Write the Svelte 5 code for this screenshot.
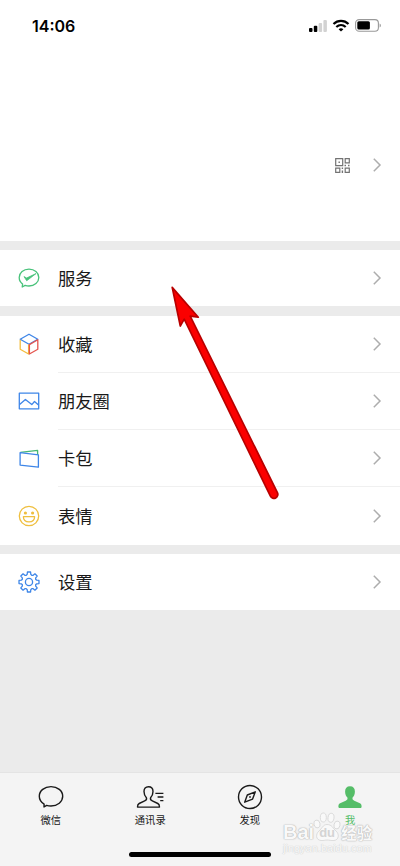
<script lang="ts">
  type Item = { icon: string; label: string };

  const groups: Item[][] = [
    [{ icon: 'service', label: '服务' }],
    [
      { icon: 'favorites', label: '收藏' },
      { icon: 'moments', label: '朋友圈' },
      { icon: 'cards', label: '卡包' },
      { icon: 'sticker', label: '表情' },
    ],
    [{ icon: 'settings', label: '设置' }],
  ];

  const tabs: Item[] = [
    { icon: 'chats', label: '微信' },
    { icon: 'contacts', label: '通讯录' },
    { icon: 'discover', label: '发现' },
    { icon: 'me', label: '我' },
  ];

  let active = $state('me');

  // outline of an eight-toothed gear centred on 11,11
  const gear = Array.from({ length: 8 }, (_, i) => {
    const points = [
      [-22.5, 7.2],
      [-13, 7.9],
      [-9, 10.1],
      [9, 10.1],
      [13, 7.9],
    ];
    return points
      .map(([deg, r]) => {
        const a = ((i * 45 + deg) * Math.PI) / 180;
        return `${(11 + r * Math.sin(a)).toFixed(2)},${(11 - r * Math.cos(a)).toFixed(2)}`;
      })
      .join(' ');
  }).join(' ');
</script>

{#snippet chevron()}
  <svg class="chevron" viewBox="0 0 10 16" width="10" height="16">
    <path d="M1.8 1.8 8 8l-6.2 6.2" />
  </svg>
{/snippet}

{#snippet rowIcon(name: string)}
  <svg class="row-icon" viewBox="0 0 22 22" width="22" height="22">
    {#if name === 'service'}
      <g stroke="#48c27a">
        <path d="M4.6 17.1C2.4 15.5 1.2 13.2 1.2 10.6c0-4.8 4.3-8.4 9.8-8.4s9.8 3.6 9.8 8.4-4.3 8.4-9.8 8.4c-1.4 0-2.700-.2-3.900-.6L4.200 20z" />
        <path d="M6 9.600 8.600 11 18 6.600 8.700 13.800z" fill="#48c27a" stroke-width=".8" />
      </g>
    {:else if name === 'favorites'}
      <path d="M2.200 6.200 11 1.200l8.800 5L11 11.300z" stroke="#3e86e8" />
      <path d="M2.200 6.800v9.400l8.400 4.800V11.600" stroke="#f3bd3e" />
      <path d="M19.800 6.800v9.400L11.400 21v-9.400z" stroke="#e5554f" />
    {:else if name === 'moments'}
      <g stroke="#3e86e8">
        <path d="M1.300 3.200h19.400v15.600H1.300z" />
        <path d="m1.600 14.600 5.800-5.200 6.400 5.200 2.700-3.100 4 3.400" />
      </g>
    {:else if name === 'cards'}
      <path d="m2.400 4.400 17.200-2.100v4.600" stroke="#48b873" />
      <path d="m2.100 4.700 18.300 2.200v12.300L2.100 17.100z" stroke="#3e86e8" />
    {:else if name === 'sticker'}
      <g stroke="#efbf3f">
        <circle cx="11" cy="11" r="9.7" />
        <path d="M5.400 11.700h11.200c0 3.100-2.300 5.100-5.600 5.100s-5.600-2-5.600-5.100z" />
        <circle class="eye" cx="7.400" cy="8" r="1.600" />
        <circle class="eye" cx="14.600" cy="8" r="1.600" />
      </g>
    {:else}
      <g stroke="#3e86e8">
        <polygon points={gear} />
        <circle cx="11" cy="11" r="3.600" />
      </g>
    {/if}
  </svg>
{/snippet}

{#snippet tabIcon(name: string)}
  <svg class="tab-icon" viewBox="0 0 30 26" width="30" height="26">
    {#if name === 'chats'}
      <path d="M8.100 20.200C5.200 18.400 3.300 15.500 3.300 12.300c0-5.500 5.200-9.700 11.700-9.700s11.700 4.200 11.700 9.700S21.500 22 15 22c-1.600 0-3.100-.2-4.400-.6L8 23z" />
    {:else if name === 'contacts'}
      <path d="M13.500 2.700c-3 0-4.500 2-4.500 4.800 0 3 1.100 4.800 2.400 6.200.5 1.400-.1 2.500-1.700 3.200l-5.500 2.600c-1.200.6-1.700 1.300-1.700 3.600h22c0-2.300-.5-3-1.700-3.600l-5.500-2.600c-1.600-.7-2.200-1.800-1.700-3.200C16.900 12.300 18 10.500 18 7.500c0-2.800-1.500-4.800-4.500-4.800z" />
      <path d="M20.400 9.400h8M22.600 13h5.800M25.200 16.600h3.200" />
    {:else if name === 'discover'}
      <circle cx="15" cy="13" r="11.500" />
      <path d="M20.300 7.800 17.600 15.100 9.700 18.200 12.300 11z" />
      <circle cx="15" cy="13" r=".3" />
    {:else}
      <path class="solid" d="M15 2.200c-3.200 0-4.900 2-4.900 5.200 0 2.800 1 4.800 2.300 6.200.4 1.500-.1 2.500-1.700 3.200l-5.600 2.500c-1.300.6-1.700 1.600-1.700 3.800 0 .5.3.8.8.8h21.600c.5 0 .8-.3.8-.8 0-2.200-.4-3.200-1.700-3.800l-5.600-2.500c-1.600-.7-2.100-1.700-1.700-3.200 1.300-1.400 2.300-3.400 2.300-6.200 0-3.200-1.700-5.200-4.900-5.200z" />
    {/if}
  </svg>
{/snippet}

<div class="screen">
  <header class="status">
    <span class="time">14:06</span>
    <div class="indicators">
      <svg viewBox="0 0 18 12" width="18" height="12">
        <rect x="0" y="8" width="3.500" height="4" rx="1" />
        <rect x="4.800" y="5.700" width="3.500" height="6.300" rx="1" />
        <rect class="weak" x="9.600" y="3" width="3.500" height="9" rx="1" />
        <rect class="weak" x="14.400" y="0" width="3.500" height="12" rx="1" />
      </svg>
      <svg class="wifi" viewBox="0 0 18 13" width="18" height="13">
        <path d="M1.500 5c4.300-4.200 10.700-4.200 15 0M4.300 8c2.800-2.600 6.600-2.600 9.400 0" />
        <path class="dot" d="M6.600 10.200c1.500-1.200 3.300-1.200 4.800 0L9 12.600z" />
      </svg>
      <svg class="battery" viewBox="0 0 27 13" width="27" height="13">
        <rect class="shell" x=".6" y=".6" width="22.800" height="11.600" rx="3.500" />
        <rect x="2.300" y="2.300" width="12.600" height="8.200" rx="1.500" />
        <path class="cap" d="M24.600 4.500c1.700.6 1.700 3.400 0 4z" />
      </svg>
    </div>
  </header>

  <section class="profile">
    <svg class="qr" viewBox="0 0 15 15" width="15" height="15">
      <path d="M.7.700h7v7h-7zM10.200.700h4.100v4.100h-4.100zM.7 10.200h4.100v4.100H.7zM10.200 10.200h4.100v4.100h-4.100z" />
      <path class="bits" d="M3.500 3.500h1.400v1.400H3.500zM9.500 6.700H11v1.500H9.500zM13 6.700h1.500v1.500H13zM6.700 9.600h1.400v1.400H6.700zM6.700 12.400h1.400V15H6.700z" />
    </svg>
    {@render chevron()}
  </section>

  <main class="groups">
    {#each groups as group}
      <section class="group">
        {#each group as item}
          <div class="row">
            {@render rowIcon(item.icon)}
            <div class="row-body">
              <span>{item.label}</span>
              {@render chevron()}
            </div>
          </div>
        {/each}
      </section>
    {/each}
  </main>

  <footer class="bottom">
    <nav class="tabs">
      {#each tabs as tab}
        <button class="tab" class:active={active === tab.icon} onclick={() => (active = tab.icon)}>
          {@render tabIcon(tab.icon)}
          <span>{tab.label}</span>
        </button>
      {/each}
    </nav>
    <div class="home-bar"></div>
  </footer>

  <svg class="arrow" viewBox="0 0 110 216" width="110" height="216">
    <path d="M3.200 3.400 29.300 33.200 21.200 32.200 108.400 208.600A3.900 3.900 0 0 1 101.400 212.200L15.200 35.200 11.300 42z" />
  </svg>

  <div class="watermark">
    <div class="brand">
      <span class="bai">Bai</span>
      <span class="paw">
        <svg viewBox="0 0 28 30" width="28" height="30">
          <ellipse cx="4" cy="12" rx="3" ry="4" transform="rotate(-15 4 12)" />
          <ellipse cx="10.300" cy="5.500" rx="3" ry="4.500" />
          <ellipse cx="18" cy="5.800" rx="3" ry="4.500" transform="rotate(8 18 5.800)" />
          <ellipse cx="24" cy="13" rx="3" ry="4" transform="rotate(15 24 13)" />
          <path d="M14 12.500c-4 0-5 4-8 6.500-3.500 3-3.500 9 2 9.500 3 .2 4-.5 6-.5s4 .7 7 .5c5-.5 5.500-6.500 2-9.500-3-2.500-4-6.500-9-6.500z" />
        </svg>
        <b>du</b>
      </span>
      <span class="cn">经验</span>
    </div>
    <div class="site">jingyan.baidu.com</div>
  </div>
</div>

<style>
  :global(body) {
    margin: 0;
  }

  .screen {
    position: relative;
    display: flex;
    flex-direction: column;
    width: 400px;
    height: 866px;
    overflow: hidden;
    background: #ebebeb;
    color: #191919;
    font-family: 'Liberation Sans', 'Noto Sans CJK SC', sans-serif;
  }

  svg {
    display: block;
    flex-shrink: 0;
  }

  .status {
    display: flex;
    align-items: center;
    justify-content: space-between;
    box-sizing: border-box;
    height: 52px;
    padding: 0 18px 0 32px;
    background: #fff;
  }

  .time {
    color: #000;
    font-family: Inter, sans-serif;
    font-size: 16px;
    font-weight: 600;
  }

  .indicators {
    display: flex;
    align-items: center;
    gap: 5px;
    padding-bottom: 1px;
  }

  .weak {
    fill: #d2d2d2;
  }

  .wifi path {
    fill: none;
    stroke: #000;
    stroke-width: 2.2;
  }

  .wifi .dot {
    fill: #000;
    stroke: none;
  }

  .battery .shell {
    fill: none;
    stroke: #999;
    stroke-width: 1.1;
  }

  .battery .cap {
    fill: #999;
  }

  .profile {
    display: flex;
    align-items: center;
    justify-content: flex-end;
    gap: 22px;
    box-sizing: border-box;
    height: 189px;
    padding: 37px 18px 0;
    background: #fff;
  }

  .qr path {
    fill: none;
    stroke: #737373;
    stroke-width: 1.2;
  }

  .qr .bits {
    fill: #737373;
    stroke: none;
  }

  .chevron path {
    fill: none;
    stroke: #adadad;
    stroke-width: 1.5;
  }

  .groups {
    display: flex;
    flex: 1;
    flex-direction: column;
    gap: 9.2px;
    padding-top: 9px;
  }

  .group {
    background: #fff;
  }

  .row {
    display: flex;
    align-items: center;
    height: 57.25px;
    padding-left: 18px;
  }

  .row:only-child {
    height: 56.4px;
  }

  .row-icon {
    fill: none;
    stroke-width: 1.3;
    stroke-linejoin: round;
  }

  .row-icon .eye {
    fill: #efbf3f;
    stroke: none;
  }

  .row-body {
    display: flex;
    flex: 1;
    align-items: center;
    justify-content: space-between;
    box-sizing: border-box;
    height: 100%;
    margin-left: 18px;
    padding-right: 18px;
    border-bottom: 1px solid #f0f0f0;
    font-size: 17.3px;
    line-height: 24px;
  }

  .row-body span {
    padding-top: 2px;
  }

  .row:last-child .row-body {
    border-bottom: 0;
  }

  .bottom {
    display: flex;
    flex-direction: column;
    align-items: center;
    justify-content: space-between;
    box-sizing: border-box;
    height: 94px;
    padding-bottom: 9px;
    border-top: 1px solid #e4e4e4;
    background: #f4f4f4;
  }

  .tabs {
    display: flex;
    width: 100%;
    padding-top: 11px;
  }

  .tab {
    display: flex;
    flex: 1;
    flex-direction: column;
    align-items: center;
    gap: 2px;
    padding: 0;
    border: 0;
    background: none;
    color: #191919;
    font-family: inherit;
    font-size: 10.3px;
    line-height: 18px;
  }

  .tab:first-child,
  .tab:last-child {
    padding-left: 1px;
  }

  .tab.active {
    color: #55bd68;
  }

  .tab-icon {
    fill: none;
    stroke: currentColor;
    stroke-width: 1.4;
    stroke-linejoin: round;
  }

  .tab-icon .solid {
    fill: currentColor;
    stroke: none;
  }

  .home-bar {
    width: 142px;
    height: 5px;
    border-radius: 3px;
    background: #000;
  }

  .arrow {
    position: absolute;
    top: 284px;
    left: 169px;
    fill: #fb0000;
    stroke: #b90000;
    stroke-width: 1.7;
    stroke-linejoin: round;
    pointer-events: none;
  }

  .watermark {
    position: absolute;
    top: 812px;
    left: 283px;
    width: 90px;
    color: #fafafa;
    opacity: 0.85;
    pointer-events: none;
    text-shadow: 0 0 1px #aaa, 0 0 1px #aaa, 0 0 2px #ccc;
  }

  .brand {
    display: flex;
    align-items: flex-end;
    height: 30px;
  }

  .bai {
    font-size: 20px;
    font-weight: 700;
    line-height: 20px;
  }

  .paw {
    position: relative;
    margin-left: -1px;
  }

  .paw svg {
    fill: #fafafa;
    stroke: #d0d0d0;
    stroke-width: 0.8;
  }

  .paw b {
    position: absolute;
    right: 0;
    bottom: 2px;
    left: 0;
    color: #cfcfcf;
    font-size: 13px;
    line-height: 14px;
    text-align: center;
    text-shadow: none;
  }

  .cn {
    font-size: 15.5px;
    font-weight: 700;
    line-height: 17px;
    white-space: nowrap;
  }

  .site {
    font-size: 11px;
    line-height: 12px;
    text-shadow: 0 0 1px #c4c4c4, 0 0 1px #d0d0d0;
  }
</style>
